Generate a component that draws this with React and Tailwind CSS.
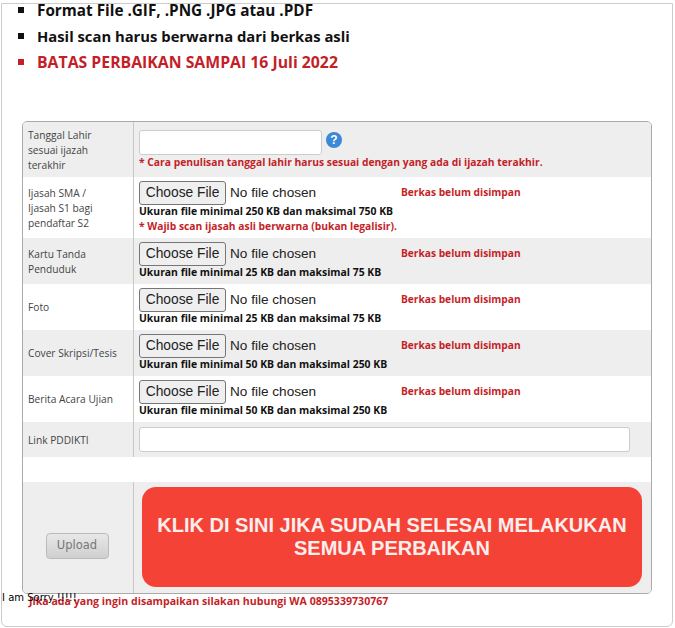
const red = 'text-[#c41f28]'

function FileInput() {
  return (
    <input
      type="file"
      className="w-[250px] h-[24px] text-[13.6px] text-[#222] [font-family:'Liberation_Sans',sans-serif] file:h-[24px] file:w-[87px] file:mr-[4px] file:p-0 file:rounded-[3px] file:border file:border-[#767676] file:bg-[#efefef] file:text-[13.8px] file:text-[#222]"
    />
  )
}

function Row({ label, shaded, height, children }) {
  return (
    <div className={`flex ${height} ${shaded ? 'bg-[#eeeeee]' : 'bg-white'}`}>
      <div className="w-[111px] shrink-0 border-r border-[#c8c8c8] px-[5px] pt-[1px] flex items-center">
        <span className="text-[10.2px] leading-[15px] text-[#444] [font-family:'Open_Sans',sans-serif]">{label}</span>
      </div>
      <div className="flex-1 min-w-0 pl-[5px]">{children}</div>
    </div>
  )
}

function FileRow({ label, shaded, height = 'h-[46px]', size, note }) {
  return (
    <Row label={label} shaded={shaded} height={height}>
      <div className="flex items-center pt-[4px]">
        <FileInput />
        <span className={`ml-[12px] text-[10.2px] font-bold ${red} [font-family:'Open_Sans',sans-serif]`}>Berkas belum disimpan</span>
      </div>
      <p className="-mt-[1px] text-[10.4px] leading-[15px] font-bold text-[#111] [font-family:'Open_Sans',sans-serif]">{size}</p>
      {note && <p className={`text-[10.3px] leading-[15px] font-bold ${red} [font-family:'Open_Sans',sans-serif]`}>{note}</p>}
    </Row>
  )
}

export default function App() {
  return (
    <div className="relative h-[628px] w-[675px] overflow-hidden bg-white">
      <div className="mt-[3px] ml-[1px] h-[624px] w-[672px] border border-[#cccccc] rounded-b-[6px]">
        <ul className="pl-[16px] leading-[26px] font-bold text-[#111] [font-family:'Open_Sans',sans-serif] -mt-[7px]">
          <li className="flex items-center gap-[13px] text-[15.3px]"><i className="size-[6px] bg-[#111]" />Format File .GIF, .PNG .JPG atau .PDF</li>
          <li className="flex items-center gap-[13px] text-[14.8px]"><i className="size-[6px] bg-[#111]" />Hasil scan harus berwarna dari berkas asli</li>
          <li className={`flex items-center gap-[13px] text-[15.8px] ${red}`}><i className="size-[6px] bg-[#c41f28]" />BATAS PERBAIKAN SAMPAI 16 Juli 2022</li>
        </ul>

        <div className="mt-[46px] ml-[20px] w-[630px] h-[473px] border border-[#aaaaaa] rounded-[5px] overflow-hidden">
          <Row label={<>Tanggal Lahir<br />sesuai ijazah<br />terakhir</>} shaded height="h-[55px]">
            <div className="flex items-center pt-[8px]">
              <div className="w-[183px] h-[25px] bg-white border border-[#cccccc] rounded-[3px]" />
              <svg className="ml-[4px] mb-[6px]" width="16" height="16" viewBox="0 0 16 16">
                <circle cx="8" cy="8" r="8" fill="#3b87d8" />
                <text x="8" y="12" textAnchor="middle" fontSize="12" fontWeight="700" fill="#fff" fontFamily="Liberation Sans, sans-serif">?</text>
              </svg>
            </div>
            <p className={`text-[10.3px] leading-[15px] font-bold ${red} [font-family:'Open_Sans',sans-serif]`}>* Cara penulisan tanggal lahir harus sesuai dengan yang ada di ijazah terakhir.</p>
          </Row>
          <FileRow label={<>Ijasah SMA /<br />Ijasah S1 bagi<br />pendaftar S2</>} height="h-[61px]" size="Ukuran file minimal 250 KB dan maksimal 750 KB" note="* Wajib scan ijasah asli berwarna (bukan legalisir)." />
          <FileRow label="Kartu Tanda Penduduk" shaded size="Ukuran file minimal 25 KB dan maksimal 75 KB" />
          <FileRow label="Foto" size="Ukuran file minimal 25 KB dan maksimal 75 KB" />
          <FileRow label="Cover Skripsi/Tesis" shaded size="Ukuran file minimal 50 KB dan maksimal 250 KB" />
          <FileRow label="Berita Acara Ujian" size="Ukuran file minimal 50 KB dan maksimal 250 KB" />
          <Row label="Link PDDIKTI" shaded height="h-[35px]">
            <div className="pt-[5px]">
              <div className="w-[491px] h-[25px] bg-white border border-[#cccccc] rounded-[3px]" />
            </div>
          </Row>
          <div className="h-[25px] bg-white" />
          <div className="flex h-[112px] bg-[#eeeeee]">
            <div className="w-[111px] shrink-0 border-r border-[#c8c8c8] flex items-center justify-center pt-[16px] pr-[2px]">
              <button className="w-[63px] h-[26px] rounded-[4px] border border-[#bbbbbb] bg-gradient-to-b from-[#e8e8e8] to-[#cfcfcf] text-[11.5px] text-[#777] [font-family:'DejaVu_Sans',sans-serif]">Upload</button>
            </div>
            <div className="flex-1 pl-[8px] pt-[5px]">
              <div className="w-[500px] h-[100px] rounded-[14px] bg-[#f44336] flex items-center justify-center text-center text-[20px] leading-[23px] font-bold text-[#fdeeee] [font-family:'Liberation_Sans',sans-serif]">
                <span>KLIK DI SINI JIKA SUDAH SELESAI MELAKUKAN<br />SEMUA PERBAIKAN</span>
              </div>
            </div>
          </div>
        </div>

        <p className={`ml-[27px] text-[10.6px] leading-[14px] font-bold ${red} [font-family:'Open_Sans',sans-serif]`}>Jika ada yang ingin disampaikan silakan hubungi WA 0895339730767</p>
      </div>
      <span className="absolute left-[2px] top-[591px] text-[10px] leading-[14px] text-black [font-family:'DejaVu_Sans',sans-serif]">I am Sorry !!!!!</span>
    </div>
  )
}
